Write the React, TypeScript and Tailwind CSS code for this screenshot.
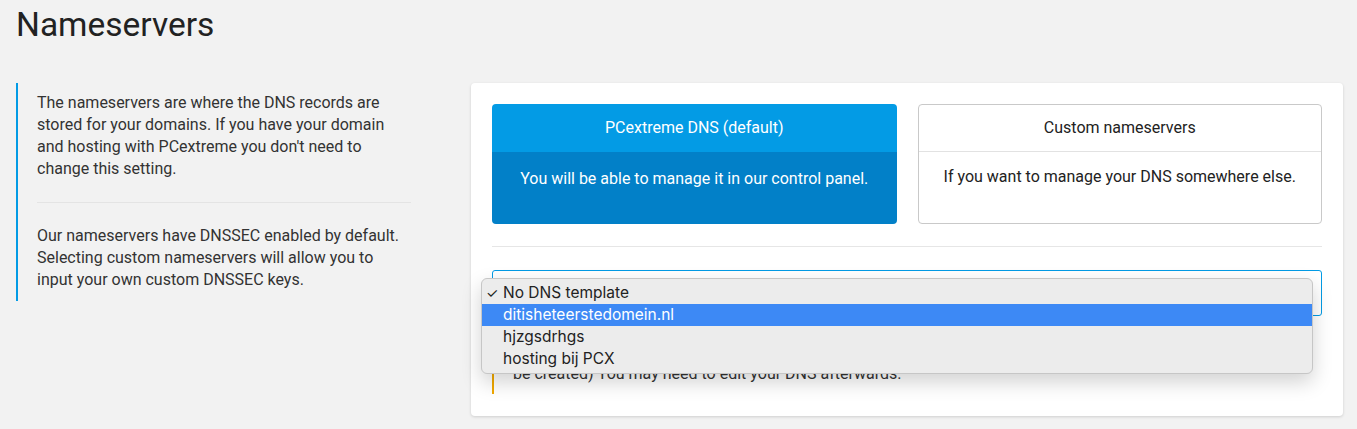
const options = ["No DNS template", "ditisheteerstedomein.nl", "hjzgsdrhgs", "hosting bij PCX"];

export default function App() {
  return (
    <div className="min-h-[429px] bg-[#f2f2f2] pl-4 pr-[14px] font-['Roboto',sans-serif] text-[#333]">
      <h1 className="pt-[5px] text-[33.5px] leading-[40px] font-normal text-[#222]">Nameservers</h1>

      <div className="mt-[38px] flex gap-[60px]">
        {/* Left intro */}
        <div className="w-[395px] shrink-0 self-start border-l-2 border-[#039be5] pl-[19px] pt-[9px] pb-[10px] text-[16px] leading-[22px]">
          <p>
            The nameservers are where the DNS records are stored for your domains. If you have your domain and hosting with
            PCextreme you don't need to change this setting.
          </p>
          <div className="my-[22px] h-px bg-[#e4e4e4]" />
          <p>
            Our nameservers have DNSSEC enabled by default. Selecting custom nameservers will allow you to input your own
            custom DNSSEC keys.
          </p>
        </div>

        {/* Right card */}
        <div className="flex-1 rounded bg-white px-[21px] pt-[21px] pb-[22px] shadow-[0_1px_3px_rgba(0,0,0,0.15)]">
          <div className="grid grid-cols-2 gap-[21px] text-[16px] leading-[22px]">
            <div className="overflow-hidden rounded text-center text-white">
              <div className="h-[48px] bg-[#039be5] pt-[13px]">PCextreme DNS (default)</div>
              <div className="h-[72px] bg-[#0280c8] pt-[16px]">You will be able to manage it in our control panel.</div>
            </div>
            <div className="overflow-hidden rounded border border-[#c9c9c9] text-center text-[#222]">
              <div className="h-[47px] border-b border-[#e2e2e2] pt-[12px]">Custom nameservers</div>
              <div className="h-[71px] pt-[14px]">If you want to manage your DNS somewhere else.</div>
            </div>
          </div>

          <div className="mt-[22px] h-px bg-[#e6e6e6]" />

          <div className="relative mt-[23px]">
            <div className="h-[46px] rounded-[3px] border border-[#039be5] bg-white" />
            {/* native select menu, open */}
            <div className="absolute left-[-11px] top-[8px] z-10 w-[832px] rounded-[6px] border border-[#c6c6c6] bg-[#ececec] py-[3px] font-['Inter',sans-serif] text-[15.5px] leading-[22px] text-[#222] shadow-[0_8px_20px_rgba(0,0,0,0.18)]">
              {options.map((o, i) => (
                <div key={o} className={`flex items-center ${i === 1 ? "bg-[#3d89f5] text-white" : ""}`}>
                  <span className="w-[21px] pl-[4px] text-[14px]">{i === 0 ? "✓" : ""}</span>
                  <span>{o}</span>
                </div>
              ))}
            </div>
          </div>

          <div className="mt-[16px] border-l-2 border-[#f0a800] pl-[19px] py-[9px] text-[16px] leading-[22px] text-[#333]">
            <p>
              Choosing a template will add its records (existing records will not
              <br />
              be created) You may need to edit your DNS afterwards.
            </p>
          </div>
        </div>
      </div>
    </div>
  );
}
